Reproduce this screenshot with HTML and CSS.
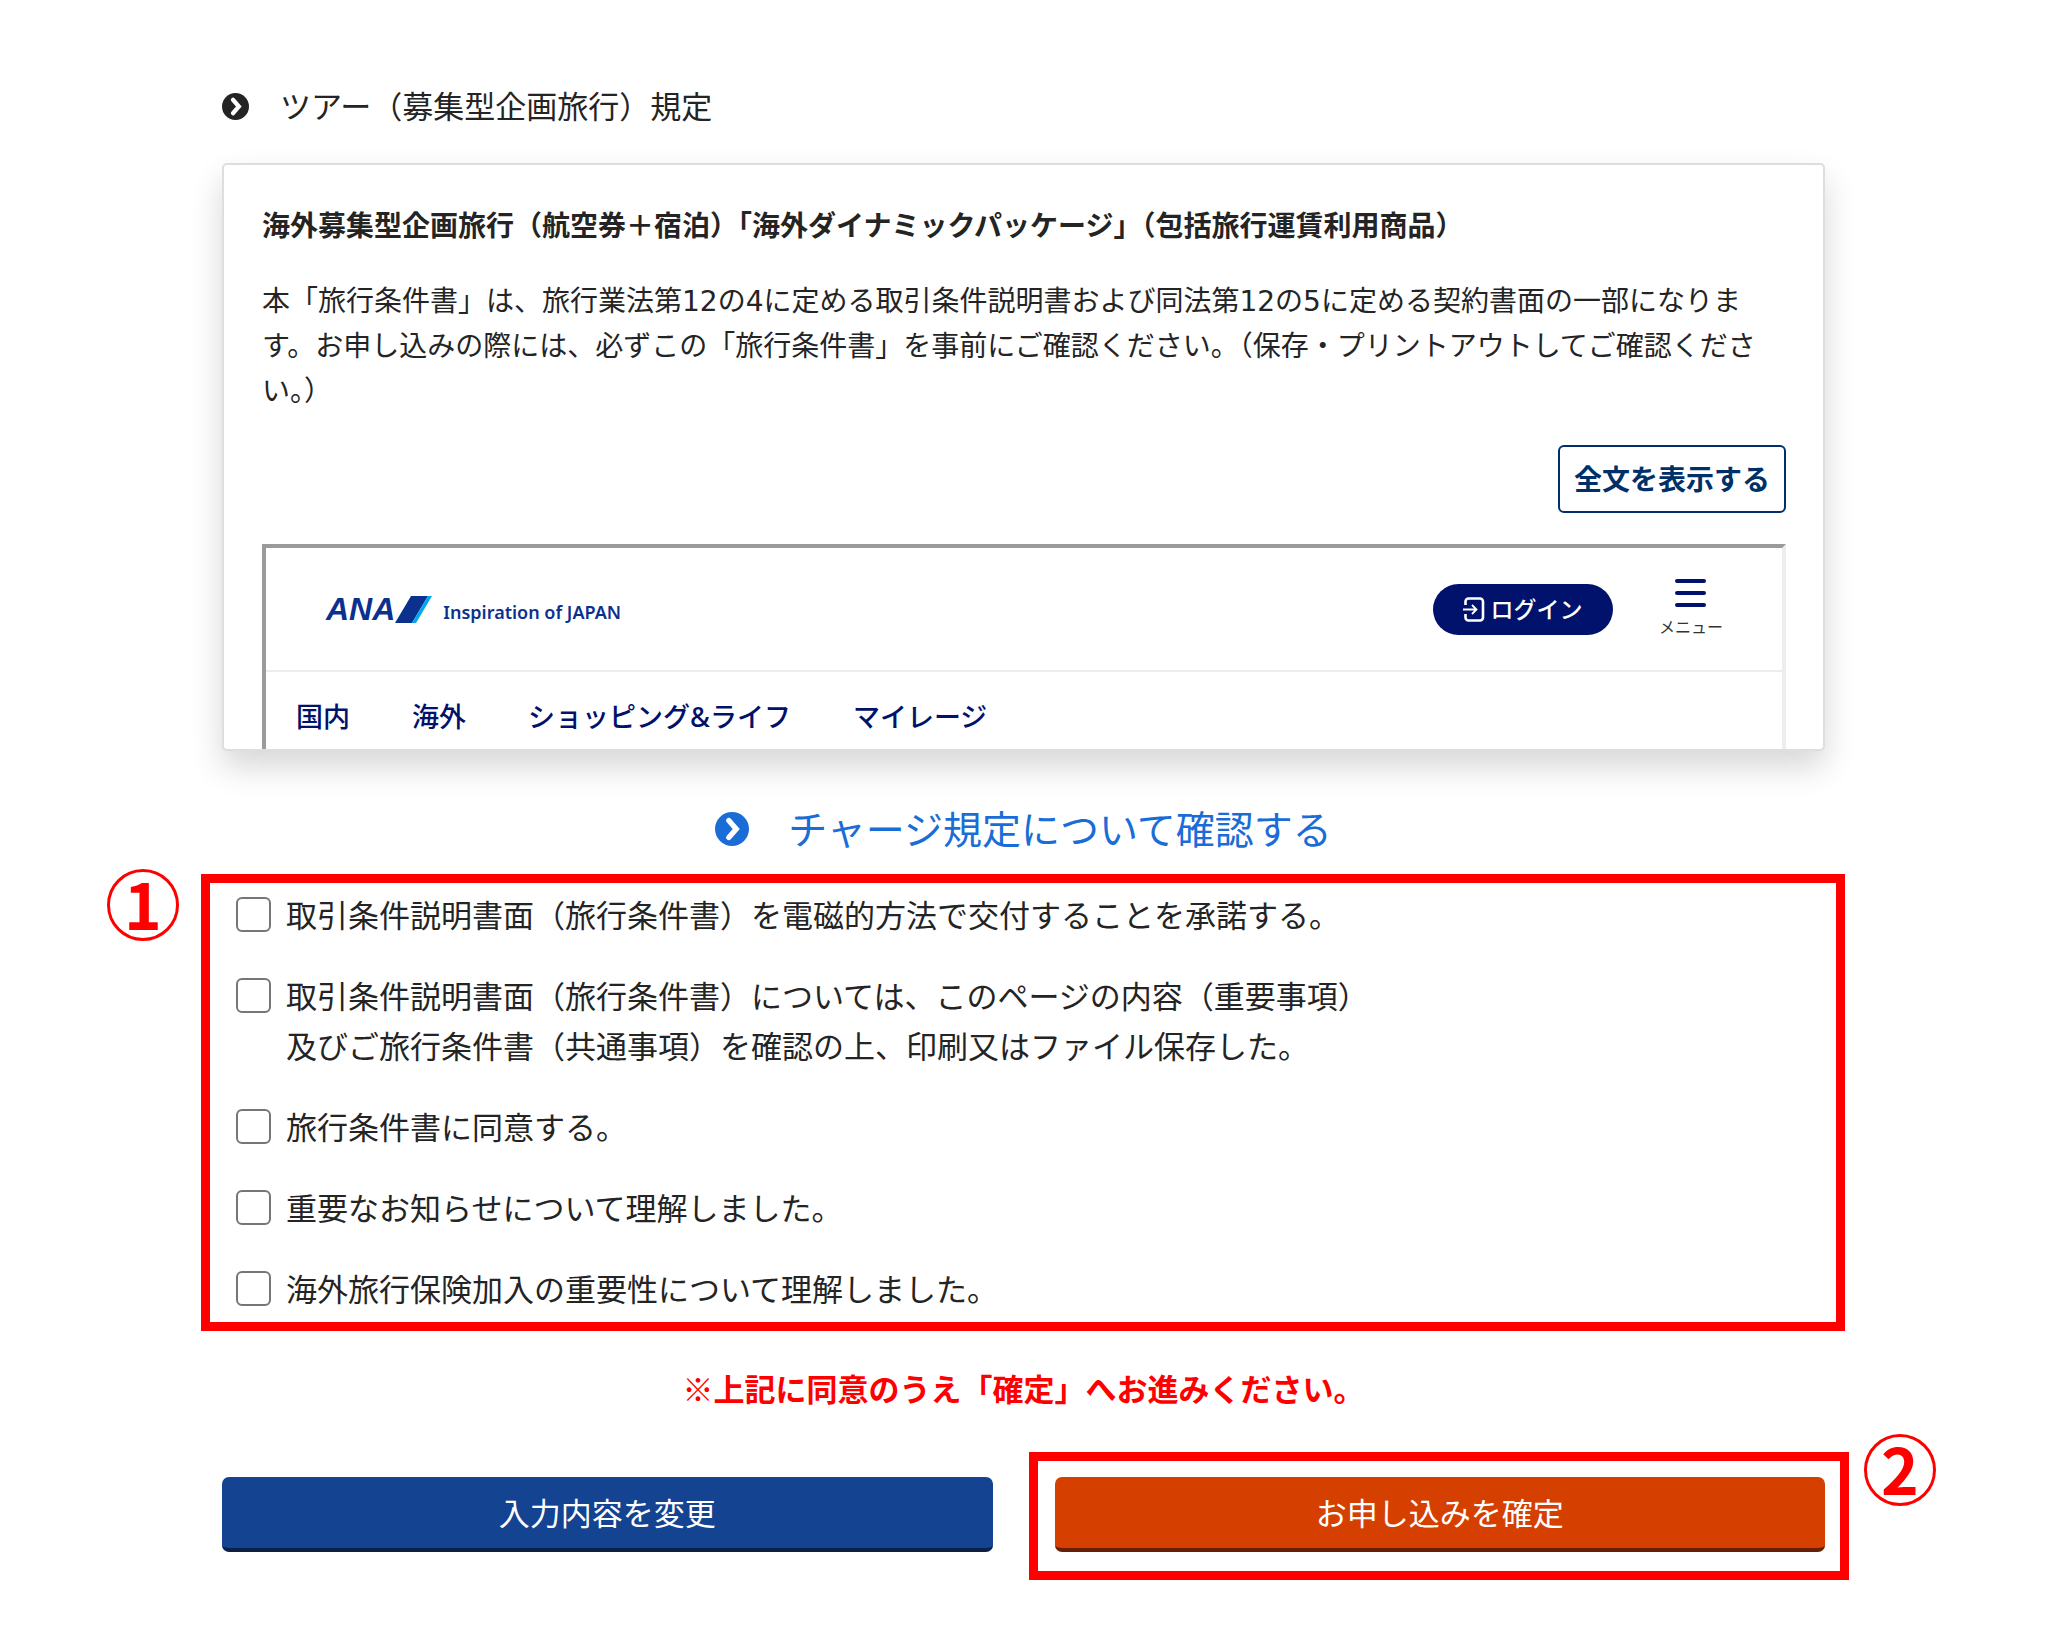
FILE: index.html
```html
<!DOCTYPE html>
<html lang="ja">
<head>
<meta charset="utf-8">
<meta name="viewport" content="width=device-width, initial-scale=1">
<title>お申し込み内容の確認</title>
<link rel="stylesheet" href="styles.css">
</head>
<body>
<main class="page">
  <h2 class="section-title">
    <svg class="arrow-icon" viewBox="0 0 32 32" aria-hidden="true"><circle cx="16" cy="16" r="16" fill="currentColor"/><path d="M13 8l7 8-7 8" fill="none" stroke="#fff" stroke-width="5" stroke-linecap="round" stroke-linejoin="miter"/></svg>
    <span>ツアー（募集型企画旅行）規定</span>
  </h2>

  <section class="card">
    <h3 class="card-title">海外募集型企画旅行（航空券＋宿泊）「海外ダイナミックパッケージ」（包括旅行運賃利用商品）</h3>
    <p class="card-text">本「旅行条件書」は、旅行業法第12の4に定める取引条件説明書および同法第12の5に定める契約書面の一部になります。お申し込みの際には、必ずこの「旅行条件書」を事前にご確認ください。（保存・プリントアウトしてご確認ください。）</p>
    <button type="button" class="show-all">全文を表示する</button>

    <div class="frame">
      <header class="site-header">
        <a class="brand" href="#">
          <span class="brand-name">ANA</span>
          <svg class="brand-mark" viewBox="0 0 37 27" aria-hidden="true"><path d="M0 27L16 0h17L17 27z" fill="#0b318f"/><path d="M17 27L33 0h4L21 27z" fill="#00a8f0"/></svg>
          <span class="brand-tagline">Inspiration of JAPAN</span>
        </a>
        <div class="site-actions">
          <button type="button" class="login">
            <svg class="login-icon" viewBox="0 0 22 25" fill="none" stroke="#fff" aria-hidden="true"><path d="M2.500 8V4.500a3 3 0 0 1 3-3H17a3 3 0 0 1 3 3v16a3 3 0 0 1-3 3H5.500a3 3 0 0 1-3-3V17" stroke-width="2.600"/><path d="M0 12.500h13M9 8l4.500 4.500L9 17" stroke-width="1.800"/></svg>
            <span>ログイン</span>
          </button>
          <button type="button" class="menu">
            <svg class="menu-icon" viewBox="0 0 31 28" aria-hidden="true"><g fill="#00126b"><rect width="31" height="4" rx="2"/><rect y="12" width="31" height="4" rx="2"/><rect y="24" width="31" height="4" rx="2"/></g></svg>
            <span>メニュー</span>
          </button>
        </div>
      </header>
      <nav class="site-nav">
        <a href="#">国内</a>
        <a href="#">海外</a>
        <a href="#">ショッピング&amp;ライフ</a>
        <a href="#">マイレージ</a>
      </nav>
    </div>
  </section>

  <a class="charge-link" href="#">
    <svg class="arrow-icon arrow-icon-large" viewBox="0 0 32 32" aria-hidden="true"><circle cx="16" cy="16" r="16" fill="currentColor"/><path d="M13 8l7 8-7 8" fill="none" stroke="#fff" stroke-width="5" stroke-linecap="round" stroke-linejoin="miter"/></svg>
    <span>チャージ規定について確認する</span>
  </a>

  <form class="agreement">
    <div class="checks">
      <span class="step step-one">1</span>
      <label class="check"><input type="checkbox"><span>取引条件説明書面（旅行条件書）を電磁的方法で交付することを承諾する。</span></label>
      <label class="check"><input type="checkbox"><span>取引条件説明書面（旅行条件書）については、このページの内容（重要事項）<br>及びご旅行条件書（共通事項）を確認の上、印刷又はファイル保存した。</span></label>
      <label class="check"><input type="checkbox"><span>旅行条件書に同意する。</span></label>
      <label class="check"><input type="checkbox"><span>重要なお知らせについて理解しました。</span></label>
      <label class="check"><input type="checkbox"><span>海外旅行保険加入の重要性について理解しました。</span></label>
    </div>
    <p class="notice">※上記に同意のうえ「確定」へお進みください。</p>
    <div class="buttons">
      <button type="button" class="btn btn-edit">入力内容を変更</button>
      <div class="confirm">
        <button type="submit" class="btn btn-confirm">お申し込みを確定</button>
        <span class="step step-two">2</span>
      </div>
    </div>
  </form>
</main>
</body>
</html>
```
FILE: styles.css
```css
* { box-sizing: border-box; }

body {
  margin: 0;
  background: #fff;
  color: #242424;
  font-family: "Noto Sans", "Noto Sans CJK JP", sans-serif;
  font-size: 31px;
  line-height: 50px;
}

h2, h3, p { margin: 0; font: inherit; }
a { color: inherit; text-decoration: none; }
button { font: inherit; cursor: pointer; }
svg { display: block; flex: none; }

.page {
  max-width: 1603px;
  margin: 0 auto;
  padding: 81px 0 100px;
}

.section-title {
  display: flex;
  align-items: center;
  gap: 31px;
  margin-bottom: 32px;
}

.arrow-icon { width: 27px; height: 27px; }
.arrow-icon-large { width: 34px; height: 34px; }

/* Terms card */
.card {
  display: flex;
  flex-direction: column;
  gap: 31px;
  padding: 38px 37px 0 38px;
  border: 2px solid #dedede;
  border-radius: 5px;
  background: #fff;
  box-shadow: 0 16px 32px rgba(0, 0, 0, .16);
  font-size: 28px;
  line-height: 45px;
}

.card-title { font-weight: 700; }

.card-text {
  padding-right: 28px;
  font-family: "DejaVu Sans", "Noto Sans CJK JP", sans-serif;
}

.show-all {
  align-self: flex-end;
  height: 68px;
  padding: 0 14px;
  border: 2px solid #003068;
  border-radius: 6px;
  background: #fff;
  color: #003068;
  font-weight: 700;
}

.frame {
  border: 4px solid #9a9a9a;
  border-right-color: #ededed;
  border-bottom: 0;
}

.site-header {
  display: flex;
  align-items: center;
  justify-content: space-between;
  height: 124px;
  padding: 0 59px 0 60px;
  border-bottom: 2px solid #ededed;
}

.brand {
  display: flex;
  align-items: center;
  color: #0b318f;
  line-height: 32px;
}

.brand-name {
  font-family: "Liberation Sans", Arial, sans-serif;
  font-size: 32px;
  font-style: italic;
  font-weight: 700;
}

.brand-mark { width: 37px; height: 27px; }

.brand-tagline {
  margin-left: 11px;
  padding-top: 5px;
  font-size: 18px;
  font-weight: 600;
}

.site-actions {
  display: flex;
  align-items: center;
  gap: 46px;
}

.login {
  display: flex;
  align-items: center;
  justify-content: center;
  gap: 5px;
  width: 180px;
  height: 51px;
  padding: 0;
  border: 0;
  border-radius: 26px;
  background: #00126b;
  color: #fff;
  font-size: 23px;
  font-weight: 500;
}

.login-icon { width: 22px; height: 25px; }

.menu {
  display: flex;
  flex-direction: column;
  align-items: center;
  gap: 8px;
  padding: 0;
  border: 0;
  background: none;
  color: #333;
  font-size: 16px;
  line-height: 24px;
}

.menu-icon { width: 31px; height: 28px; }

.site-nav {
  display: flex;
  gap: 62px;
  padding: 22px 30px 10px;
  color: #00126b;
  font-size: 27px;
  font-weight: 500;
}

/* Charge rules */
.charge-link {
  display: flex;
  align-items: center;
  justify-content: center;
  gap: 39px;
  margin: 47px 0 14px;
  color: #1a6dd6;
  font-size: 39px;
  line-height: 62px;
}

/* Agreement checks */
.checks {
  position: relative;
  display: flex;
  flex-direction: column;
  gap: 31px;
  margin: 0 -20px 0 -21px;
  padding: 7px 26px 8px;
  border: 9px solid #f00;
}

.check {
  display: flex;
  align-items: flex-start;
  gap: 15px;
}

.check input {
  flex: none;
  appearance: none;
  width: 35px;
  height: 35px;
  margin: 7px 0 0;
  border: 2px solid #767676;
  border-radius: 6px;
  background: #fff;
}

.check input:checked { background: #134391; }

.notice {
  margin: 32px 0 64px;
  color: #f00;
  font-family: "Noto Sans CJK JP", sans-serif;
  font-weight: 700;
  text-align: center;
}

.buttons {
  display: grid;
  grid-template-columns: 1fr 1fr;
  gap: 62px;
}

.btn {
  display: block;
  width: 100%;
  height: 75px;
  padding: 0;
  border: 0;
  border-bottom: 4px solid #0a2145;
  border-radius: 7px;
  color: #fff;
}

.btn-edit { background: #134391; }
.btn-confirm { border-bottom-color: #671f05; background: #d54000; }

.confirm { position: relative; }

/* Outline around the confirm button */
.confirm::after {
  content: "";
  position: absolute;
  inset: -25px -24px -28px -26px;
  border: 9px solid #f00;
  pointer-events: none;
}

/* Numbered step marks */
.step {
  position: absolute;
  width: 72px;
  height: 72px;
  border: 3px solid #f00;
  border-radius: 50%;
  color: #f00;
  font-family: "Noto Sans CJK JP", sans-serif;
  font-size: 64px;
  font-weight: 700;
  line-height: 60px;
  text-align: center;
}

.step-one { top: -14px; left: -103px; }
.step-two { top: -43px; right: -111px; }
```
